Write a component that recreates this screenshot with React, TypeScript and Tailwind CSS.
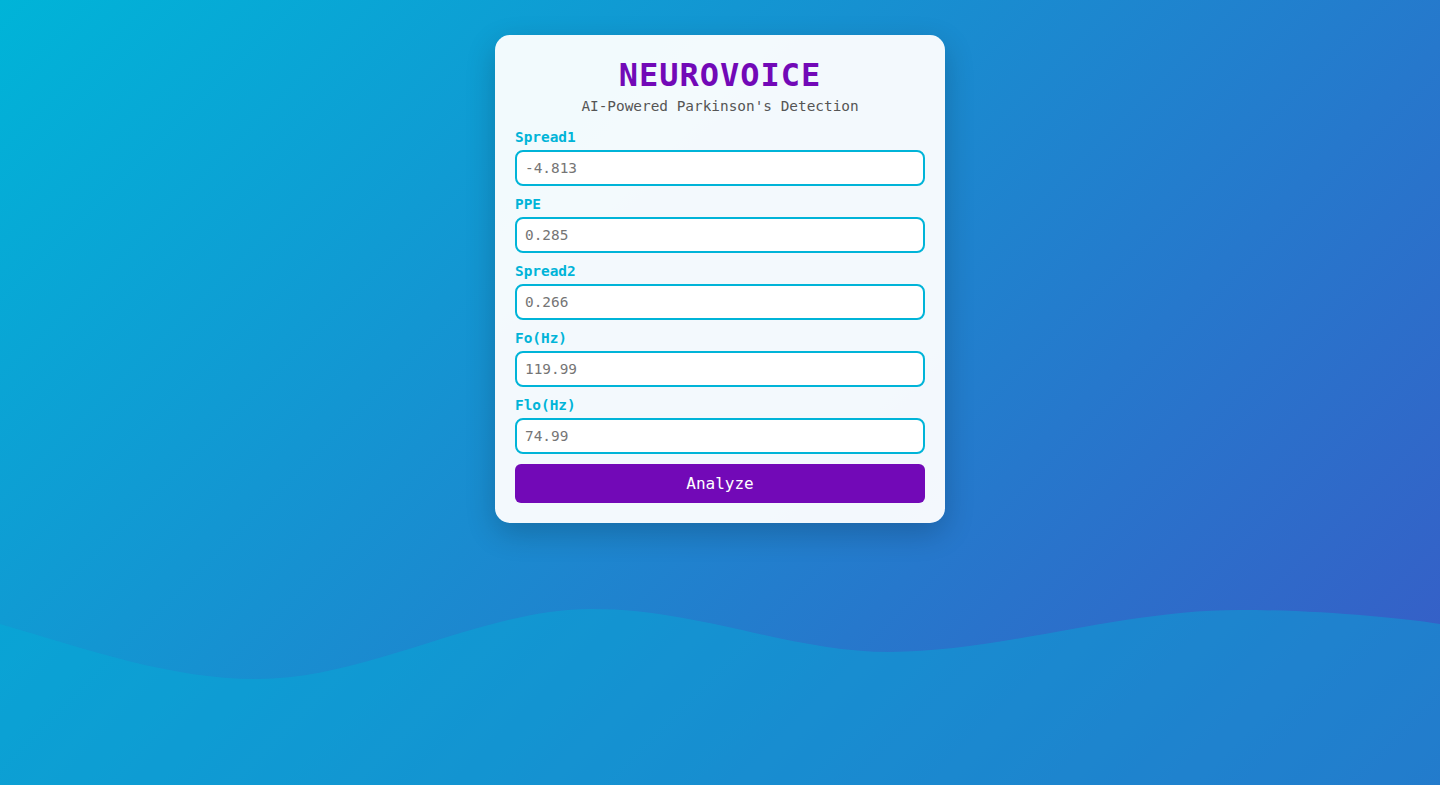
const fields = [
    { label: 'Spread1', placeholder: '-4.813' },
    { label: 'PPE', placeholder: '0.285' },
    { label: 'Spread2', placeholder: '0.266' },
    { label: 'Fo(Hz)', placeholder: '119.99' },
    { label: 'Flo(Hz)', placeholder: '74.99' },
];

function Wave() {
    return (
        <svg
            className="pointer-events-none absolute inset-0 h-full w-full"
            viewBox="0 0 1440 785"
            preserveAspectRatio="none"
        >
            <path
                d="M0,624 C90,650 170,679 257,679 C370,679 480,609 592,609 C700,609 790,652 890,652 C1000,652 1120,610 1239,610 C1320,610 1400,618 1440,624 L1440,785 L0,785 Z"
                fill="#00b4d8"
                fillOpacity="0.38"
            />
        </svg>
    );
}

export default function App() {
    return (
        <div className="relative h-[785px] w-full overflow-hidden bg-[linear-gradient(135deg,#00b4d8,#395ac6)] font-['DejaVu_Sans_Mono',monospace]">
            <Wave />

            <div className="relative flex justify-center pt-[35px]">
                <div className="w-[450px] rounded-[15px] bg-white/95 p-5 shadow-[0_10px_30px_rgba(0,0,0,0.2)]">
                    <h1 className="text-center text-[32px] leading-[40px] font-bold tracking-[1px] text-[#7209b7]">
                        NEUROVOICE
                    </h1>
                    <p className="mt-px text-center text-[14.4px] leading-[20px] text-[#555]">
                        AI-Powered Parkinson's Detection
                    </p>

                    <form className="mt-[11px] flex flex-col">
                        {fields.map((f, i) => (
                            <div key={f.label} className={i > 0 ? 'mt-2' : ''}>
                                <label className="block text-[14.4px] leading-[20px] font-bold text-[#00b4d8]">
                                    {f.label}
                                </label>
                                <input
                                    type="text"
                                    placeholder={f.placeholder}
                                    className="mt-[3px] block h-9 w-full rounded-lg border-2 border-[#00b4d8] bg-white px-2 text-[14.4px] text-[#333] outline-none placeholder:text-[#757575]"
                                />
                            </div>
                        ))}
                        <button
                            type="button"
                            className="mt-[10px] h-[39px] w-full rounded-md bg-[#7209b7] text-base text-white"
                        >
                            Analyze
                        </button>
                    </form>
                </div>
            </div>
        </div>
    );
}
